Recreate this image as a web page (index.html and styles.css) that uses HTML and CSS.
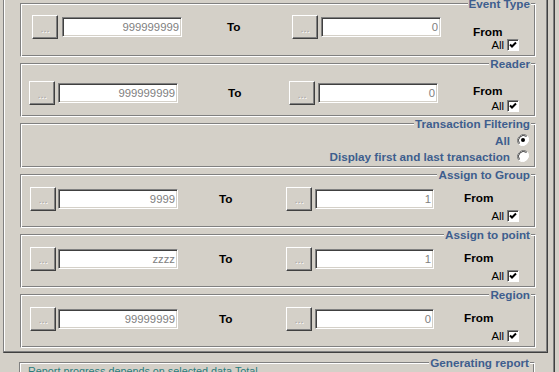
FILE: index.html
```html
<!DOCTYPE html>
<html lang="en">
<head>
  <meta charset="UTF-8" />
  <title>Report Filters</title>
  <link rel="stylesheet" href="styles.css">
</head>
<body>

  <div class="frame">
    <div class="panel">

      <fieldset class="grp grp-ev">
        <legend>Event Type</legend>
        <div class="range">
          <div class="pick"><button class="dots">...</button><input class="field" value="999999999"></div>
          <span class="to">To</span>
          <div class="pick"><button class="dots">...</button><input class="field" value="0"></div>
          <div class="from">
            <b>From</b>
            <label>All <span class="check"><svg width="8" height="8" viewBox="0 0 8 8"><path d="M1 3.5 L3 5.5 L7 1.5" fill="none" stroke="#000" stroke-width="2"/></svg></span></label>
          </div>
        </div>
      </fieldset>

      <fieldset class="grp grp-rd">
        <legend>Reader</legend>
        <div class="range">
          <div class="pick"><button class="dots">...</button><input class="field" value="999999999"></div>
          <span class="to">To</span>
          <div class="pick"><button class="dots">...</button><input class="field" value="0"></div>
          <div class="from">
            <b>From</b>
            <label>All <span class="check"><svg width="8" height="8" viewBox="0 0 8 8"><path d="M1 3.5 L3 5.5 L7 1.5" fill="none" stroke="#000" stroke-width="2"/></svg></span></label>
          </div>
        </div>
      </fieldset>

      <fieldset class="grp grp-tx">
        <legend>Transaction Filtering</legend>
        <div class="opt">All <span class="radio"><svg width="12" height="12" viewBox="0 0 12 12"><circle cx="6" cy="6" r="5.5" fill="#fff"/><path d="M10.2 1.8 A6 6 0 0 0 1.8 10.2" fill="none" stroke="#808080"/><path d="M9.5 2.5 A5 5 0 0 0 2.5 9.5" fill="none" stroke="#404040"/><path d="M1.8 10.2 A6 6 0 0 0 10.2 1.8" fill="none" stroke="#fff"/><circle cx="6" cy="6" r="2" fill="#000"/></svg></span></div>
        <div class="opt">Display first and last transaction <span class="radio"><svg width="12" height="12" viewBox="0 0 12 12"><circle cx="6" cy="6" r="5.5" fill="#fff"/><path d="M10.2 1.8 A6 6 0 0 0 1.8 10.2" fill="none" stroke="#808080"/><path d="M9.5 2.5 A5 5 0 0 0 2.5 9.5" fill="none" stroke="#404040"/><path d="M1.8 10.2 A6 6 0 0 0 10.2 1.8" fill="none" stroke="#fff"/></svg></span></div>
      </fieldset>

      <fieldset class="grp">
        <legend>Assign to Group</legend>
        <div class="range">
          <div class="pick"><button class="dots">...</button><input class="field" value="9999"></div>
          <span class="to">To</span>
          <div class="pick"><button class="dots">...</button><input class="field" value="1"></div>
          <div class="from">
            <b>From</b>
            <label>All <span class="check"><svg width="8" height="8" viewBox="0 0 8 8"><path d="M1 3.5 L3 5.5 L7 1.5" fill="none" stroke="#000" stroke-width="2"/></svg></span></label>
          </div>
        </div>
      </fieldset>

      <fieldset class="grp">
        <legend>Assign to point</legend>
        <div class="range">
          <div class="pick"><button class="dots">...</button><input class="field" value="zzzz"></div>
          <span class="to">To</span>
          <div class="pick"><button class="dots">...</button><input class="field" value="1"></div>
          <div class="from">
            <b>From</b>
            <label>All <span class="check"><svg width="8" height="8" viewBox="0 0 8 8"><path d="M1 3.5 L3 5.5 L7 1.5" fill="none" stroke="#000" stroke-width="2"/></svg></span></label>
          </div>
        </div>
      </fieldset>

      <fieldset class="grp">
        <legend>Region</legend>
        <div class="range">
          <div class="pick"><button class="dots">...</button><input class="field" value="99999999"></div>
          <span class="to">To</span>
          <div class="pick"><button class="dots">...</button><input class="field" value="0"></div>
          <div class="from">
            <b>From</b>
            <label>All <span class="check"><svg width="8" height="8" viewBox="0 0 8 8"><path d="M1 3.5 L3 5.5 L7 1.5" fill="none" stroke="#000" stroke-width="2"/></svg></span></label>
          </div>
        </div>
      </fieldset>

    </div>

    <fieldset class="grp grp-report">
      <legend>Generating report</legend>
      <p class="progress">Report progress depends on selected data Total</p>
    </fieldset>
  </div>

</body>
</html>
```

FILE: styles.css
```css
body {
  margin: 0;
  background: #d4d0c8;
  font-family: "Liberation Sans", Arial, sans-serif;
  overflow: hidden;
}
.frame {
  width: 554px;
  height: 372px;
  overflow: hidden;
  border-right: 1px solid #404040;
  box-shadow: inset -1px 0 #808080;
}
.panel {
  box-sizing: border-box;
  width: 545px;
  margin: -4px 0 0 3px;
  padding: 0 11px 4px 16px;
  border: 1px solid;
  border-color: #fff #404040 #404040 #808080;
  box-shadow: inset -1px -1px #808080, inset 1px 0 #fff;
}

/* group boxes */
.grp {
  box-sizing: border-box;
  width: 516px;
  height: 60px;
  margin: 0;
  padding: 0;
  min-width: 0;
  border: 1px solid;
  border-color: #808080 #fff #fff #808080;
  box-shadow: inset 1px 1px #fff, inset -1px -1px #808080;
}
.grp legend {
  margin-left: auto;
  margin-right: 4px;
  padding: 0 1px;
  background: #d4d0c8;
  color: #3e5e8e;
  font-size: 11.7px;
  font-weight: bold;
  line-height: 13px;
}
.grp-tx {
  height: 51px;
}

/* range rows */
.range {
  --pad: 9px;
  --top: 5px;
  --gap: 2px;
  --gap2: 3px;
  --w2: 119px;
  --to-l: 41px;
  --to-r: 52px;
  --from-l: 30px;
  --from-t: 5.5px;
  --all-t: 6.5px;
  display: flex;
  align-items: center;
  padding-left: var(--pad);
  margin-top: var(--top);
  height: 25px;
}
.grp-ev .range {
  --pad: 11px;
  --gap: 4px;
  --w2: 120px;
  --to-l: 45px;
  --to-r: 50px;
  --from-l: 32px;
  --from-t: 11px;
  --all-t: 1px;
  height: 24px;
}
.grp-rd .range {
  --pad: 8px;
  --top: 11px;
  --gap: 3px;
  --w2: 120px;
  --to-l: 50px;
  --to-r: 46px;
  --from-l: 35px;
  --from-t: 4px;
  --all-t: 3px;
  height: 24px;
}
.pick {
  display: flex;
  align-items: center;
  gap: var(--gap);
}
.pick + .to + .pick {
  gap: var(--gap2);
}
.pick + .to + .pick .field {
  width: var(--w2);
}
.dots {
  box-sizing: border-box;
  width: 26px;
  height: 24px;
  padding: 2px 0 0;
  border: 1px solid;
  border-color: #fff #404040 #404040 #fff;
  box-shadow: inset -1px -1px #808080;
  background: #d4d0c8;
  color: #a8a8a8;
  text-shadow: 1px 1px #fff;
  font-family: "Liberation Sans", Arial, sans-serif;
  font-size: 11px;
  line-height: 13px;
}
.field {
  box-sizing: border-box;
  width: 120px;
  height: 20px;
  padding: 0 2px;
  border: 1px solid;
  border-color: #808080 #fff #fff #808080;
  box-shadow: inset 1px 1px #404040, inset -1px -1px #d4d0c8;
  background: #fff;
  color: #808080;
  text-align: right;
  font-family: "Liberation Sans", Arial, sans-serif;
  font-size: 11.3px;
  outline: none;
}
.to {
  width: 15px;
  margin: 0 var(--to-r) 0 var(--to-l);
  font-size: 11.8px;
  font-weight: bold;
}
.from {
  flex: 1;
  align-self: flex-start;
  display: flex;
  flex-direction: column;
  margin: var(--from-t) 16px 0 var(--from-l);
}
.from b {
  font-size: 11.8px;
  line-height: 12px;
}
.from label {
  display: flex;
  justify-content: flex-end;
  align-items: center;
  gap: 3px;
  margin-top: var(--all-t);
  height: 12px;
  font-size: 11.3px;
}
.check {
  box-sizing: border-box;
  display: flex;
  align-items: center;
  justify-content: center;
  width: 12px;
  height: 12px;
  border: 1px solid;
  border-color: #808080 #fff #fff #808080;
  box-shadow: inset 1px 1px #404040;
  background: #fff;
}

/* transaction filter options */
.opt {
  display: flex;
  justify-content: flex-end;
  align-items: center;
  gap: 7px;
  height: 16px;
  margin-right: 6px;
  color: #3e5e8e;
  font-size: 11.7px;
  font-weight: bold;
}
.opt:first-of-type {
  margin-top: 2px;
}
.radio {
  display: flex;
}

/* report box */
.grp-report {
  margin: 3px 0 0 19px;
  height: 40px;
}
.progress {
  margin: -4px 0 0 8px;
  color: #2a7c7c;
  font-size: 10.8px;
}
```
